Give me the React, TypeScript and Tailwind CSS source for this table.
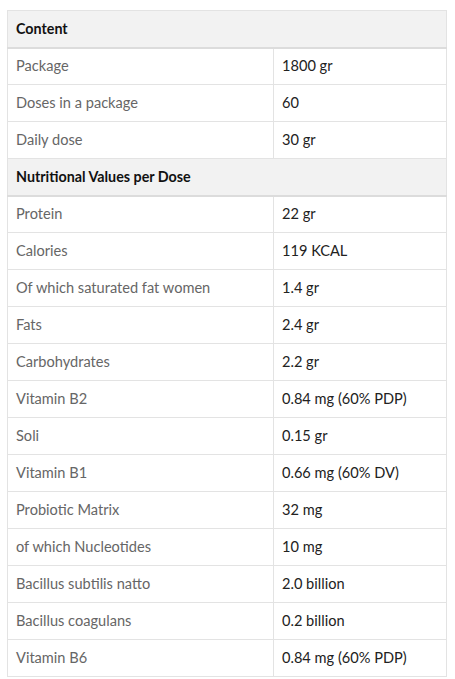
const content: [string, string][] = [
  ['Package', '1800 gr'],
  ['Doses in a package', '60'],
  ['Daily dose', '30 gr'],
];

const nutrition: [string, string][] = [
  ['Protein', '22 gr'],
  ['Calories', '119 KCAL'],
  ['Of which saturated fat women', '1.4 gr'],
  ['Fats', '2.4 gr'],
  ['Carbohydrates', '2.2 gr'],
  ['Vitamin B2', '0.84 mg (60% PDP)'],
  ['Soli', '0.15 gr'],
  ['Vitamin B1', '0.66 mg (60% DV)'],
  ['Probiotic Matrix', '32 mg'],
  ['of which Nucleotides', '10 mg'],
  ['Bacillus subtilis natto', '2.0 billion'],
  ['Bacillus coagulans', '0.2 billion'],
  ['Vitamin B6', '0.84 mg (60% PDP)'],
];

function HeaderRow({ title }: { title: string }) {
  return (
    <tr className="h-[37px] bg-[#f2f2f2]">
      <th colSpan={2} className="border border-[#e3e3e3] border-b-2 border-b-[#dcdcdc] px-2 text-left text-[14.3px] font-bold text-[#111]">
        {title}
      </th>
    </tr>
  );
}

function Row({ label, value }: { label: string; value: string }) {
  return (
    <tr className="h-[37px]">
      <td className="w-[266px] border border-[#e3e3e3] px-2 text-[14.6px] text-[#666]">{label}</td>
      <td className="border border-[#e3e3e3] px-2 text-[14.6px] text-[#222]">{value}</td>
    </tr>
  );
}

export default function App() {
  return (
    <div className="min-h-[679px] bg-white pl-[7px] pt-[10px]" style={{ fontFamily: 'Lato, "Noto Sans", sans-serif' }}>
      <table className="w-[440px] border-collapse">
        <tbody>
          <HeaderRow title="Content" />
          {content.map(([l, v]) => <Row key={l} label={l} value={v} />)}
          <HeaderRow title="Nutritional Values per Dose" />
          {nutrition.map(([l, v]) => <Row key={l} label={l} value={v} />)}
        </tbody>
      </table>
    </div>
  );
}
